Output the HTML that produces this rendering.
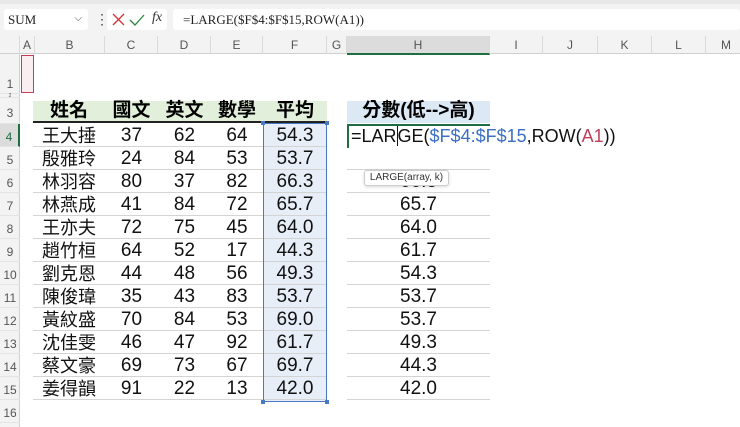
<!DOCTYPE html>
<html><head><meta charset="utf-8"><style>
*{margin:0;padding:0;box-sizing:border-box}
body{width:740px;height:427px;overflow:hidden;background:#fff;position:relative;font-family:"Liberation Sans","Noto Sans CJK TC",sans-serif}
.a{position:absolute}
.ch{position:absolute;top:36px;height:18px;font-size:12px;color:#555;text-align:center;line-height:18px;border-right:1px solid #dadada}
.rh{position:absolute;left:0;width:20px;font-size:12px;color:#555;text-align:center;border-bottom:1px solid #e4e4e4}
.c{position:absolute;height:23px;line-height:23px;font-size:19px;text-align:center;color:#111;border-bottom:1px solid #d4d4d4}
</style></head><body>
<div class="a" style="left:0;top:0;width:740px;height:4px;background:#e8e8e8"></div>
<div class="a" style="left:0;top:4px;width:740px;height:32px;background:#f3f3f3"></div>
<div class="a" style="left:4px;top:9px;width:84px;height:21px;background:#fff;border-radius:3px;font-family:'Liberation Serif',serif;font-size:13px;line-height:21px;padding-left:4px;color:#222">SUM<span style="position:absolute;right:6px;top:-1px;font-size:10px;color:#444">⌵</span></div>
<div class="a" style="left:95px;top:12px;font-size:14px;color:#444;line-height:14px">⋮</div>
<div class="a" style="left:107px;top:9px;width:60px;height:21px;background:#fff;border-radius:3px"></div>
<svg class="a" style="left:110px;top:11px" width="56" height="18"><path d="M3 3L14 14M14 3L3 14" stroke="#d13438" stroke-width="1.3" fill="none"/><path d="M20 9L25 14L34 4" stroke="#2e8540" stroke-width="1.3" fill="none"/></svg>
<div class="a" style="left:152px;top:10px;font-size:14px;font-family:'Liberation Serif',serif;font-style:italic;color:#333">fx</div>
<div class="a" style="left:173px;top:9px;width:567px;height:21px;background:#fff;border-radius:3px;font-family:'Liberation Serif',serif;font-size:13px;line-height:21px;padding-left:10px;color:#222">=LARGE($F$4:$F$15,ROW(A1))</div>
<div class="a" style="left:0;top:36px;width:740px;height:18px;background:#f3f3f3;border-bottom:1px solid #d0d0d0"></div>
<div class="ch" style="left:0;width:20px"></div>
<div class="ch" style="left:20px;width:15px">A</div>
<div class="ch" style="left:35px;width:70px">B</div>
<div class="ch" style="left:105px;width:53px">C</div>
<div class="ch" style="left:158px;width:53px">D</div>
<div class="ch" style="left:211px;width:52px">E</div>
<div class="ch" style="left:263px;width:64px">F</div>
<div class="ch" style="left:327px;width:20px">G</div>
<div class="ch" style="left:347px;width:143px;background:#dcdcdc;border-bottom:2px solid #1e6e42;height:19px">H</div>
<div class="ch" style="left:490px;width:53px">I</div>
<div class="ch" style="left:543px;width:55px">J</div>
<div class="ch" style="left:598px;width:54px">K</div>
<div class="ch" style="left:652px;width:54px">L</div>
<div class="ch" style="left:706px;width:40px;border:none">M</div>
<div class="a" style="left:0;top:54px;width:20px;height:373px;background:#f3f3f3;border-right:1px solid #d0d0d0"></div>
<div class="rh" style="top:54px;height:40px;line-height:60px">1</div>
<div class="rh" style="top:94px;height:4px;line-height:4px;font-size:5px">2</div>
<div class="rh" style="top:98px;height:26px;line-height:30px">3</div>
<div class="rh" style="top:124px;height:23px;line-height:26px;background:#dcdcdc;color:#1e6e42;border-right:2px solid #1e6e42">4</div>
<div class="rh" style="top:147px;height:23px;line-height:26px">5</div>
<div class="rh" style="top:170px;height:23px;line-height:26px">6</div>
<div class="rh" style="top:193px;height:23px;line-height:26px">7</div>
<div class="rh" style="top:216px;height:23px;line-height:26px">8</div>
<div class="rh" style="top:239px;height:23px;line-height:26px">9</div>
<div class="rh" style="top:262px;height:23px;line-height:26px">10</div>
<div class="rh" style="top:285px;height:23px;line-height:26px">11</div>
<div class="rh" style="top:308px;height:23px;line-height:26px">12</div>
<div class="rh" style="top:331px;height:23px;line-height:26px">13</div>
<div class="rh" style="top:354px;height:23px;line-height:26px">14</div>
<div class="rh" style="top:377px;height:23px;line-height:26px">15</div>
<div class="rh" style="top:400px;height:23px;line-height:26px">16</div>
<div class="a" style="left:21px;top:55px;width:13px;height:38px;border:1px solid #c0405a;background:#fbeef0"></div>
<div class="a" style="left:33px;top:101px;width:294px;height:22px;background:#e2efda;border-bottom:2px solid #222"></div>
<div class="a" style="left:347px;top:101px;width:143px;height:22px;background:#dde8f5"></div>
<div class="a" style="left:33px;top:99px;width:72px;height:24px;font-size:19px;font-weight:bold;text-align:center;line-height:24px">姓名</div>
<div class="a" style="left:105px;top:99px;width:53px;height:24px;font-size:19px;font-weight:bold;text-align:center;line-height:24px">國文</div>
<div class="a" style="left:158px;top:99px;width:53px;height:24px;font-size:19px;font-weight:bold;text-align:center;line-height:24px">英文</div>
<div class="a" style="left:211px;top:99px;width:52px;height:24px;font-size:19px;font-weight:bold;text-align:center;line-height:24px">數學</div>
<div class="a" style="left:263px;top:99px;width:64px;height:24px;font-size:19px;font-weight:bold;text-align:center;line-height:24px">平均</div>
<div class="a" style="left:347px;top:99px;width:143px;height:24px;font-size:19px;font-weight:bold;text-align:center;line-height:24px">分數(低--&gt;高)</div>
<div class="a" style="left:263px;top:124px;width:64px;height:277px;background:#e8eef8"></div>
<div id="t"></div>
<script>
var d=[["王大捶",37,62,64,"54.3"],["殷雅玲",24,84,53,"53.7"],["林羽容",80,37,82,"66.3"],["林燕成",41,84,72,"65.7"],["王亦夫",72,75,45,"64.0"],["趙竹桓",64,52,17,"44.3"],["劉克恩",44,48,56,"49.3"],["陳俊瑋",35,43,83,"53.7"],["黃紋盛",70,84,53,"69.0"],["沈佳雯",46,47,92,"61.7"],["蔡文豪",69,73,67,"69.7"],["姜得韻",91,22,13,"42.0"]];
var h=["","","66.3","65.7","64.0","61.7","54.3","53.7","53.7","49.3","44.3","42.0"];
var cols=[[33,72],[105,53],[158,53],[211,52],[263,64]],s="";
for(var i=0;i<12;i++){var y=124+i*23;
for(var j=0;j<5;j++){s+='<div class="c" style="left:'+cols[j][0]+'px;width:'+cols[j][1]+'px;top:'+y+'px'+(j==0?';font-family:\'Noto Sans CJK TC\',sans-serif;font-size:18px':'')+'">'+d[i][j]+'</div>';}
if(i>0)s+='<div class="c" style="left:347px;width:143px;top:'+y+'px">'+h[i]+'</div>';}
document.getElementById("t").innerHTML=s;
</script>
<div class="a" style="left:263px;top:123px;width:64px;height:279px;border:1px solid #4a78c2"></div>
<div class="a" style="left:261px;top:121px;width:4px;height:4px;background:#4a78c2"></div>
<div class="a" style="left:325px;top:121px;width:4px;height:4px;background:#4a78c2"></div>
<div class="a" style="left:261px;top:400px;width:4px;height:4px;background:#4a78c2"></div>
<div class="a" style="left:325px;top:400px;width:4px;height:4px;background:#4a78c2"></div>
<div class="a" style="left:347px;top:124px;width:143px;height:24px;background:#fff;border-left:2px solid #1e6e42;border-top:2px solid #1e6e42"></div>
<div class="a" style="left:351px;top:124px;height:24px;line-height:24px;font-size:18px;white-space:nowrap;color:#111">=LAR<span style="border-left:1px solid #111"></span>GE(<span style="color:#3b6fc4">$F$4:$F$15</span>,ROW(<span style="color:#c0405a">A1</span>))</div>
<div class="a" style="left:364px;top:170px;width:85px;height:16px;background:#fff;border:1px solid #ccc;border-radius:3px;font-size:10px;line-height:14px;text-align:center;color:#333;box-shadow:0 1px 3px rgba(0,0,0,.15)">LARGE(array, k)</div>
</body></html>
